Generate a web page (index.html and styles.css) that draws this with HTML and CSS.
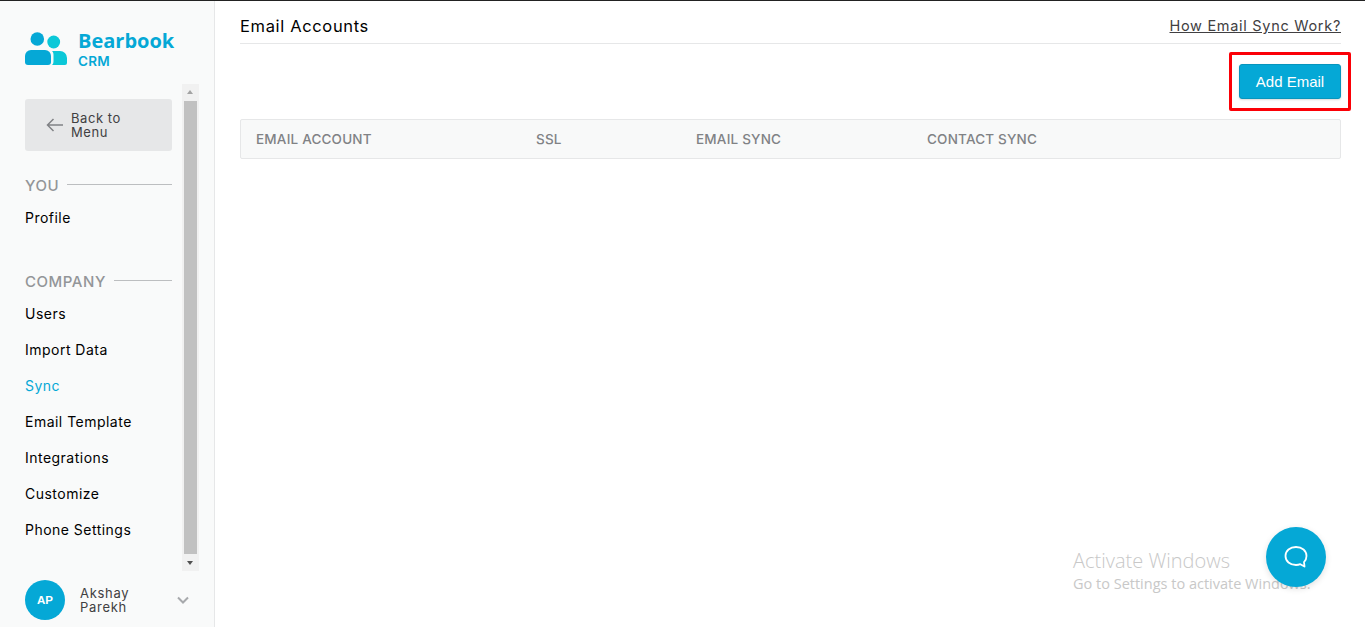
FILE: index.html
```html
<!DOCTYPE html>
<html lang="en">
<head>
<meta charset="utf-8">
<title>Email Accounts</title>
<link rel="stylesheet" href="styles.css">
</head>
<body>
<div class="app">
  <aside class="sidebar">
    <div class="logo">
      <svg class="logo-mark" width="42" height="33" viewBox="0 0 42 33">
        <circle cx="12.300" cy="7" r="6.800" fill="#05a8d6"/>
        <circle cx="28.700" cy="10" r="6.400" fill="#0bc8d8"/>
        <path d="M0 24a6 6 0 0 1 6-6h14a6 6 0 0 1 6 6v6a3 3 0 0 1-3 3H3a3 3 0 0 1-3-3z" fill="#05a8d6"/>
        <path d="M27 19h8a7 7 0 0 1 7 7v5a2 2 0 0 1-2 2H27c1-1 1.500-2 1.500-4v-6c0-2-.5-3-1.500-4z" fill="#0bc8d8"/>
      </svg>
      <div class="logo-text">
        <div class="logo-name">Bearbook</div>
        <div class="logo-sub">CRM</div>
      </div>
    </div>
    <div class="scroll-area">
      <nav class="nav">
        <a class="back">
          <svg width="18" height="14" viewBox="0 0 18 14" fill="none" stroke="#808285" stroke-width="1.500"><path d="M17 7H1.500M7.500 1L1.500 7l6 6"/></svg>
          <span>Back to<br>Menu</span>
        </a>
        <div class="section-title you"><span>YOU</span><i></i></div>
        <a class="item">Profile</a>
        <div class="section-title company"><span>COMPANY</span><i></i></div>
        <a class="item">Users</a>
        <a class="item">Import Data</a>
        <a class="item active">Sync</a>
        <a class="item">Email Template</a>
        <a class="item">Integrations</a>
        <a class="item">Customize</a>
        <a class="item">Phone Settings</a>
      </nav>
      <div class="scrollbar">
        <div class="arrow up"></div>
        <div class="thumb"></div>
        <div class="arrow down"></div>
      </div>
    </div>
    <div class="user">
      <div class="avatar">AP</div>
      <div class="user-name">Akshay<br>Parekh</div>
      <svg class="chev" width="12" height="8" viewBox="0 0 12 8" fill="none" stroke="#a7a9ac" stroke-width="2"><path d="M1 1.500l5 5 5-5"/></svg>
    </div>
  </aside>
  <main class="main">
    <header class="head">
      <h1>Email Accounts</h1>
      <a class="how">How Email Sync Work?</a>
    </header>
    <div class="actions">
      <div class="highlight"></div>
      <button class="add">Add Email</button>
    </div>
    <div class="table-head">
      <span class="c1">EMAIL ACCOUNT</span>
      <span class="c2">SSL</span>
      <span class="c3">EMAIL SYNC</span>
      <span class="c4">CONTACT SYNC</span>
    </div>
  </main>
</div>
<div class="watermark">
  <div class="wm1">Activate Windows</div>
  <div class="wm2">Go to Settings to activate Windows.</div>
</div>
<div class="chat">
  <svg width="26" height="26" viewBox="0 0 26 26" fill="none" stroke="#fff" stroke-width="1.800" stroke-linejoin="round"><path d="M13 3c6 0 10.500 3.700 10.500 9 0 2.500-1 4.600-2.500 6.100l.5 4.400-4.200-2.300c-1.200.5-2.600.8-4.300.8-6 0-10.500-3.700-10.500-9S7 3 13 3z"/></svg>
</div>
</body>
</html>
```
FILE: styles.css
```css
* { box-sizing: border-box; }
html, body { margin: 0; height: 100%; overflow: hidden; }
body {
  font-family: Inter, "Noto Sans", sans-serif;
  background: #fff;
  color: #000;
  border-top: 1px solid #222;
}
.app { display: flex; height: 626px; }
.sidebar {
  width: 215px;
  flex: none;
  background: #f9fafa;
  border-right: 1px solid #e6e7e8;
  display: flex;
  flex-direction: column;
}
.logo {
  display: flex;
  align-items: flex-start;
  gap: 11px;
  padding: 31px 0 0 25px;
  height: 83px;
}
.logo-mark { flex: none; }
.logo-name {
  font-family: "Open Sans", sans-serif;
  font-size: 20px;
  line-height: 19px;
  font-weight: 700;
  color: #05a8d6;
  margin-top: -1px;
}
.logo-sub {
  font-size: 13.500px;
  line-height: 14px;
  font-weight: 600;
  color: #05a8d6;
  letter-spacing: .3px;
  margin-top: 4px;
}
.scroll-area { display: flex; height: 487px; padding-left: 25px; }
.nav { width: 147px; flex: none; padding-top: 15px; }
.back {
  display: flex;
  align-items: center;
  gap: 7px;
  height: 52px;
  padding-left: 21px;
  background: #e6e7e8;
  border-radius: 3px;
  font-size: 13px;
  line-height: 14px;
  letter-spacing: .55px;
  color: #414042;
}
.section-title {
  display: flex;
  align-items: center;
  gap: 8px;
  font-size: 15px;
  font-weight: 500;
  color: #939598;
  line-height: 20px;
  letter-spacing: .55px;
}
.section-title i { flex: 1; height: 1px; background: #bcbec0; margin-top: -3px; }
.you { margin-top: 25px; }
.company { margin-top: 36px; }
.item {
  display: block;
  height: 36px;
  line-height: 36px;
  font-size: 14px;
  letter-spacing: .48px;
  color: #000;
}
.you + .item { margin-top: 4px; }
.company + .item { margin-top: 4px; }
.active { color: #05a8d6; }
.scrollbar {
  width: 17px;
  margin-left: 10px;
  background: #f1f1f1;
  display: flex;
  flex-direction: column;
}
.arrow { height: 17px; flex: none; position: relative; }
.arrow::after {
  content: "";
  position: absolute;
  left: 5px;
  border-left: 3.500px solid transparent;
  border-right: 3.500px solid transparent;
}
.up::after { top: 6px; border-bottom: 4px solid #a3a3a3; }
.down::after { top: 7px; border-top: 4px solid #505050; }
.thumb { flex: 1; background: #c1c1c1; margin: 0 2px; }
.user {
  display: flex;
  align-items: center;
  padding: 9px 0 0 25px;
}
.avatar {
  width: 40px;
  height: 40px;
  border-radius: 50%;
  background: #05a8d6;
  color: #fff;
  font-family: "Liberation Sans", sans-serif;
  font-size: 11.500px;
  font-weight: 700;
  display: flex;
  align-items: center;
  justify-content: center;
}
.user-name {
  margin-left: 15px;
  width: 97px;
  font-size: 13px;
  line-height: 14px;
  letter-spacing: .7px;
  color: #414042;
}
.main { flex: 1; padding: 0 24px 0 25px; }
.head {
  height: 43px;
  border-bottom: 1px solid #e6e7e8;
  display: flex;
  justify-content: space-between;
  align-items: flex-start;
  padding-top: 15px;
}
h1 {
  margin: 0;
  font-size: 16.500px;
  line-height: 20px;
  font-weight: 400;
  letter-spacing: .65px;
  color: #000;
}
.how {
  font-size: 14.500px;
  line-height: 20px;
  color: #414042;
  text-decoration: underline;
  letter-spacing: .7px;
}
.actions {
  position: relative;
  display: flex;
  justify-content: flex-end;
  padding-top: 20px;
  height: 75px;
}
.highlight {
  position: absolute;
  left: 989px;
  top: 8px;
  width: 122px;
  height: 59px;
  border: 3px solid #fb0007;
  border-radius: 2px;
}
.add {
  position: relative;
  width: 102px;
  height: 35px;
  background: #05a8d6;
  border: 1px solid #0795bd;
  border-radius: 3px;
  color: #fff;
  font-family: "Liberation Sans", sans-serif;
  font-size: 15px;
  padding: 0;
  box-shadow: 0 1px 2px rgba(0,0,0,.15);
}
.table-head {
  height: 40px;
  background: #f8f9f9;
  border: 1px solid #e6e7e8;
  border-radius: 2px;
  display: grid;
  grid-template-columns: 280px 160px 231px 1fr;
  align-items: center;
  padding-left: 15px;
  font-size: 13.500px;
  font-weight: 500;
  letter-spacing: .2px;
  color: #808285;
}
.watermark {
  position: absolute;
  left: 1073px;
  top: 548px;
  font-family: "Open Sans", sans-serif;
  color: #c8c8c8;
}
.wm1 { font-size: 20px; line-height: 26px; font-weight: 300; }
.wm2 { font-size: 14.500px; line-height: 20px; }
.chat {
  position: absolute;
  left: 1266px;
  top: 527px;
  width: 60px;
  height: 60px;
  border-radius: 50%;
  background: #05a8d6;
  box-shadow: 0 2px 6px rgba(0,0,0,.12);
  display: flex;
  align-items: center;
  justify-content: center;
}
```
